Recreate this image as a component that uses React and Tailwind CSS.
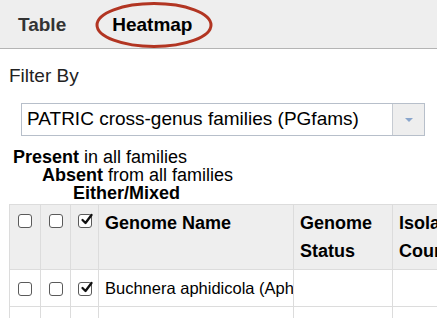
import React from "react";

const Box = ({ checked }) => (
  <span className="relative inline-block w-[14px] h-[14px] border border-[#5a5a5a] rounded-[3px] bg-white box-border align-middle">
    {checked && (
      <svg className="absolute left-[1px] top-[-2px]" width="14" height="13" viewBox="0 0 14 13">
        <path d="M2.5 7 L5.5 10 L11.5 2" fill="none" stroke="#111" strokeWidth="2.3" strokeLinecap="round" strokeLinejoin="round" />
      </svg>
    )}
  </span>
);

export default function App() {
  return (
    <div className="w-[437px] h-[318px] overflow-hidden bg-white text-[#222]" style={{ fontFamily: '"Liberation Sans", Arial, sans-serif' }}>
      <div className="relative h-[49px] bg-[#eeeeee] border-b border-[#b4b4b4] flex items-center pt-[3px]">
        <span className="ml-[18px] text-[19px] font-bold text-[#333]">Table</span>
        <span className="ml-[46px] text-[19px] font-bold text-black">Heatmap</span>
        <svg className="absolute left-0 top-0" width="240" height="49" viewBox="0 0 240 49">
          <ellipse cx="154" cy="25" rx="57" ry="21.5" fill="none" stroke="#b23522" strokeWidth="3" />
        </svg>
      </div>
      <div className="pl-[9px] pt-[16px] text-[19px] leading-[22px]">Filter By</div>
      <div className="ml-[21px] mt-[16px] w-[404px] h-[33px] border border-[#b7bfca] flex box-border">
        <div className="flex-1 pl-[5px] flex items-center text-[19px] text-black">PATRIC cross-genus families (PGfams)</div>
        <div className="w-[32px] bg-[#eeeeee] border-l border-[#c6cbd2] flex items-center justify-center">
          <svg width="10" height="6" viewBox="0 0 10 6"><path d="M1 1 L9 1 L5 5 Z" fill="#8aa6cc" /></svg>
        </div>
      </div>
      <div className="mt-[12px] text-[18px] leading-[18px] text-black">
        <div className="pl-[13px]"><b>Present</b> in all families</div>
        <div className="pl-[42px]"><b>Absent</b> from all families</div>
        <div className="pl-[73px] font-bold">Either/Mixed</div>
      </div>
      <table className="ml-[9px] mt-[2px] border-collapse table-fixed w-[560px] text-black">
        <colgroup>
          <col className="w-[31px]" />
          <col className="w-[30px]" />
          <col className="w-[28px]" />
          <col className="w-[195px]" />
          <col className="w-[99px]" />
          <col className="w-[177px]" />
        </colgroup>
        <thead>
          <tr className="bg-[#eeeeee] h-[65px]">
            <th className="border border-[#dcdcdc] align-top pt-[3px] text-center"><Box /></th>
            <th className="border border-[#dcdcdc] align-top pt-[3px] text-center"><Box /></th>
            <th className="border border-[#dcdcdc] align-top pt-[3px] text-center"><Box checked /></th>
            <th className="border border-[#dcdcdc] align-top text-left pl-[6px] pt-[4px] text-[18px] leading-[28px] font-bold whitespace-nowrap">Genome Name</th>
            <th className="border border-[#dcdcdc] align-top text-left pl-[6px] pt-[4px] text-[18px] leading-[28px] font-bold">Genome<br />Status</th>
            <th className="border border-[#dcdcdc] align-top text-left pl-[6px] pt-[4px] text-[18px] leading-[28px] font-bold">Isolation<br />Country</th>
          </tr>
        </thead>
        <tbody>
          <tr className="h-[37px]">
            <td className="border border-[#dcdcdc] text-center"><Box /></td>
            <td className="border border-[#dcdcdc] text-center"><Box /></td>
            <td className="border border-[#dcdcdc] text-center"><Box checked /></td>
            <td className="border border-[#dcdcdc] pl-[6px] text-[16.5px] whitespace-nowrap overflow-hidden">Buchnera aphidicola (Aph</td>
            <td className="border border-[#dcdcdc]"></td>
            <td className="border border-[#dcdcdc]"></td>
          </tr>
          <tr className="h-[37px]">
            <td className="border border-[#dcdcdc] text-center"><Box /></td>
            <td className="border border-[#dcdcdc] text-center"><Box /></td>
            <td className="border border-[#dcdcdc] text-center"><Box checked /></td>
            <td className="border border-[#dcdcdc] pl-[6px] text-[16.5px] whitespace-nowrap overflow-hidden">Buchnera aphidicola (Ci</td>
            <td className="border border-[#dcdcdc]"></td>
            <td className="border border-[#dcdcdc]"></td>
          </tr>
        </tbody>
      </table>
    </div>
  );
}
